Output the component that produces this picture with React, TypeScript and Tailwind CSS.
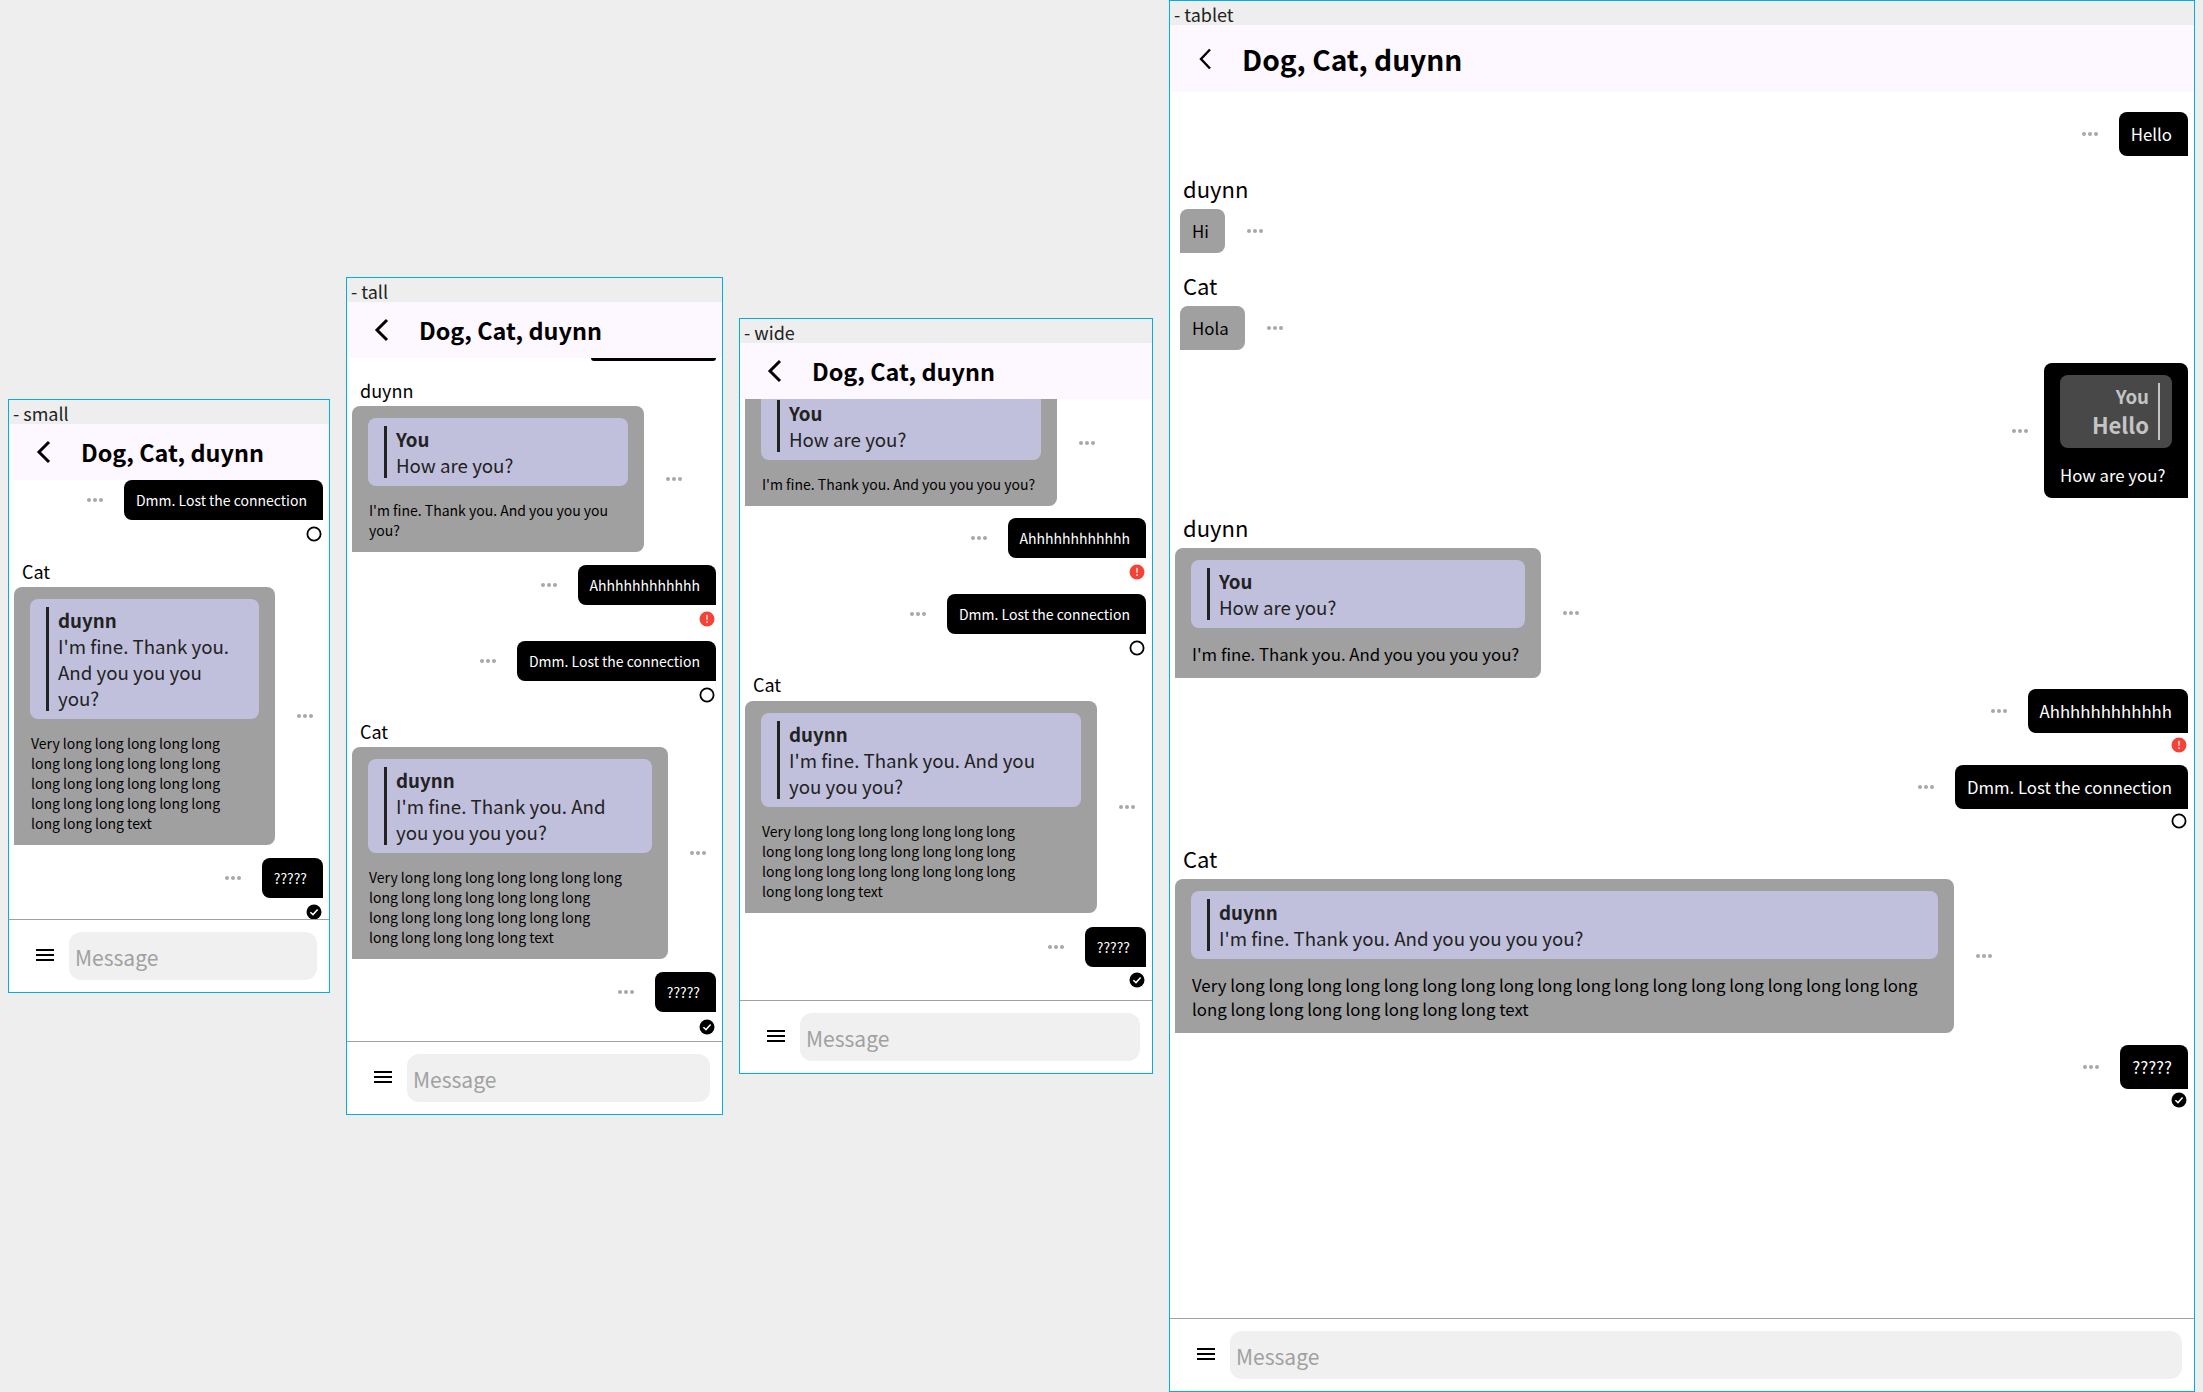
import React from "react";

const font = { fontFamily: '"Noto Sans CJK SC", "Noto Sans", sans-serif' };

function Dots() {
  return (
    <svg width="16" height="4" viewBox="0 0 16 4" className="shrink-0">
      <circle cx="2" cy="2" r="2" fill="#a8a8a8" />
      <circle cx="8" cy="2" r="2" fill="#a8a8a8" />
      <circle cx="14" cy="2" r="2" fill="#a8a8a8" />
    </svg>
  );
}

function Status({ kind, mt }: { kind: "sent" | "done" | "error"; mt: string }) {
  return (
    <div className={`flex justify-end mr-[7px] ${mt}`}>
      <svg width="16" height="16" viewBox="0 0 16 16" className="block">
        {kind === "sent" && <circle cx="8" cy="8" r="6.6" fill="none" stroke="#000" strokeWidth="1.8" />}
        {kind === "done" && (
          <>
            <circle cx="8" cy="8" r="7.5" fill="#000" />
            <path d="M4.4 8.2 L7 10.6 L11.6 5.6" fill="none" stroke="#fff" strokeWidth="1.5" />
          </>
        )}
        {kind === "error" && (
          <>
            <circle cx="8" cy="8" r="7.5" fill="#f44336" />
            <rect x="7.2" y="3.8" width="1.6" height="5" fill="#ffd0cc" />
            <rect x="7.2" y="10.2" width="1.6" height="1.8" fill="#ffd0cc" />
          </>
        )}
      </svg>
    </div>
  );
}

function Out({ text, cls, mt, quote }: { text: string; cls: string; mt: string; quote?: boolean }) {
  return (
    <div className={`flex justify-end items-center mr-[6px] ${quote ? "gap-[16px]" : "gap-[21px]"} ${mt}`}>
      <Dots />
      <div className={`bg-black text-white rounded-t-[8px] rounded-bl-[8px] ${cls}`}>
        {quote && (
          <div className="flex justify-end gap-[9px] w-[112px] bg-[#484848] rounded-[8px] text-[#c4c4c4] h-[73px] px-[12px] py-[8px] mb-[15px]">
            <div className="text-right">
              <div className="font-bold text-[18.7px] leading-[26px]">You</div>
              <div className="font-bold text-[22px] leading-[30px]">Hello</div>
            </div>
            <div className="w-[2px] bg-[#c4c4c4]" />
          </div>
        )}
        {text}
      </div>
    </div>
  );
}

function In({
  children,
  cls,
  mt,
}: {
  children: React.ReactNode;
  cls: string;
  mt?: string;
}) {
  return (
    <div className={`flex items-center gap-[22px] ${mt ?? ""}`}>
      <div className={`bg-[#a0a0a0] text-black rounded-t-[8px] rounded-br-[8px] shrink-0 ${cls}`}>{children}</div>
      <Dots />
    </div>
  );
}

function Quote({ title, lines }: { title: string; lines: string[] }) {
  return (
    <div className="bg-[#c0c0dc] rounded-[8px] text-[#222] text-[18.7px] leading-[26px] px-[16px] py-[8px] mb-[14px] flex gap-[9px]">
      <div className="w-[3px] bg-[#222] shrink-0" />
      <div className="whitespace-nowrap">
        <div className="font-bold">{title}</div>
        {lines.map((l) => (
          <div key={l}>{l}</div>
        ))}
      </div>
    </div>
  );
}

function Body({ lines, cls }: { lines: string[]; cls: string }) {
  return (
    <div className={`whitespace-nowrap pl-[1px] ${cls}`}>
      {lines.map((l, i) => (
        <div key={i}>{l}</div>
      ))}
    </div>
  );
}

function Name({ children, cls }: { children: string; cls: string }) {
  return <div className={`text-black ${cls}`}>{children}</div>;
}

function Frame({
  label,
  cls,
  tablet,
  children,
}: {
  label: string;
  cls: string;
  tablet?: boolean;
  children: React.ReactNode;
}) {
  return (
    <div className={`absolute bg-white border border-[#00aeef] flex flex-col overflow-hidden ${cls}`}>
      <div className="h-[24px] bg-[#eeeeee] text-[18px] leading-[26px] text-[#222] pl-[4px] overflow-hidden shrink-0">
        {label}
      </div>
      <div
        className={`bg-[#fdf7ff] flex items-center shrink-0 font-bold text-black ${tablet ? "h-[67px] text-[28.2px]" : "h-[56px] text-[23.4px]"}`}
      >
        <svg width="16" height="24" viewBox="0 0 16 24" className="ml-[26px] mr-[30px] shrink-0">
          {tablet ? (
            <path d="M14 2.5 L5 12 L14 21.5" fill="none" stroke="#000" strokeWidth="2.4" />
          ) : (
            <path d="M14 2 L4 12 L14 22" fill="none" stroke="#000" strokeWidth="3" />
          )}
        </svg>
        <span className="mt-[2px]">Dog, Cat, duynn</span>
      </div>
      <div className="flex-1 min-h-0 overflow-hidden">{children}</div>
      <div className="h-[73px] shrink-0 border-t border-[#a0a0a0] flex items-center pl-[27px] pr-[12px]">
        <svg width="18" height="12" viewBox="0 0 18 12" className="shrink-0 mr-[15px] -mt-[3px]">
          <rect width="18" height="2" y="0" fill="#000" />
          <rect width="18" height="2" y="5" fill="#000" />
          <rect width="18" height="2" y="10" fill="#000" />
        </svg>
        <div className="flex-1 h-[48px] rounded-[12px] bg-[#f0f0f0] text-[#a0a0a0] text-[21px] leading-[51px] pl-[6px]">
          Message
        </div>
      </div>
    </div>
  );
}

const smallB = "text-[14px] leading-[20px] pl-[12px] pr-[16px] py-[10px]";
const tabB = "text-[16.8px] leading-[24px] pl-[12px] pr-[16px] py-[10px]";
const nameS = "text-[18px] leading-[26px] ml-[13px]";
const nameT = "text-[22px] leading-[30px] ml-[13px]";
const bodyS = "text-[14px] leading-[20px]";
const bodyT = "text-[16.8px] leading-[24px]";
const inS = "ml-[5px] px-[16px] pt-[12px] pb-[12px]";

function longs(n: number) {
  return Array(n).fill("long").join(" ");
}

export default function App() {
  return (
    <div className="relative w-[2203px] h-[1392px] bg-[#eeeeee] overflow-hidden" style={font}>
      <Frame label="- small" cls="left-[8px] top-[399px] w-[322px] h-[594px]">
        <Out text="Dmm. Lost the connection" cls={smallB} mt="" />
        <Status kind="sent" mt="mt-[6px]" />
        <Name cls={`${nameS} mt-[16px]`}>Cat</Name>
        <In cls={`w-[261px] ${inS}`} mt="mt-[3px]">
          <Quote title="duynn" lines={["I'm fine. Thank you.", "And you you you", "you?"]} />
          <Body
            cls={bodyS}
            lines={[`Very ${longs(5)}`, longs(6), longs(6), longs(6), `${longs(3)} text`]}
          />
        </In>
        <Out text="?????" cls={smallB} mt="mt-[13px]" />
        <Status kind="done" mt="mt-[6px]" />
      </Frame>

      <Frame label="- tall" cls="left-[346px] top-[277px] w-[377px] h-[838px]">
        <div className="h-[3px] w-[125px] ml-auto mr-[6px] bg-black rounded-b-[8px]" />
        <Name cls={`${nameS} mt-[16px]`}>duynn</Name>
        <In cls={`w-[292px] ${inS}`} mt="mt-[3px]">
          <Quote title="You" lines={["How are you?"]} />
          <Body cls={bodyS} lines={["I'm fine. Thank you. And you you you", "you?"]} />
        </In>
        <Out text="Ahhhhhhhhhhhh" cls={smallB} mt="mt-[13px]" />
        <Status kind="error" mt="mt-[6px]" />
        <Out text="Dmm. Lost the connection" cls={smallB} mt="mt-[14px]" />
        <Status kind="sent" mt="mt-[6px]" />
        <Name cls={`${nameS} mt-[15px]`}>Cat</Name>
        <In cls={`w-[316px] ${inS}`} mt="mt-[3px]">
          <Quote title="duynn" lines={["I'm fine. Thank you. And", "you you you you?"]} />
          <Body cls={bodyS} lines={[`Very ${longs(7)}`, longs(7), longs(7), `${longs(5)} text`]} />
        </In>
        <Out text="?????" cls={smallB} mt="mt-[13px]" />
        <Status kind="done" mt="mt-[7px]" />
      </Frame>

      <Frame label="- wide" cls="left-[739px] top-[318px] w-[414px] h-[756px]">
        <div className="-mt-[19px]">
          <In cls={`w-[312px] ${inS}`}>
            <Quote title="You" lines={["How are you?"]} />
            <Body cls={bodyS} lines={["I'm fine. Thank you. And you you you you?"]} />
          </In>
        </div>
        <Out text="Ahhhhhhhhhhhh" cls={smallB} mt="mt-[12px]" />
        <Status kind="error" mt="mt-[6px]" />
        <Out text="Dmm. Lost the connection" cls={smallB} mt="mt-[14px]" />
        <Status kind="sent" mt="mt-[6px]" />
        <Name cls={`${nameS} mt-[15px]`}>Cat</Name>
        <In cls={`w-[352px] ${inS}`} mt="mt-[4px]">
          <Quote title="duynn" lines={["I'm fine. Thank you. And you", "you you you?"]} />
          <Body cls={bodyS} lines={[`Very ${longs(7)}`, longs(8), longs(8), `${longs(3)} text`]} />
        </In>
        <Out text="?????" cls={smallB} mt="mt-[14px]" />
        <Status kind="done" mt="mt-[5px]" />
      </Frame>

      <Frame label="- tablet" cls="left-[1169px] top-[0px] w-[1026px] h-[1392px]" tablet>
        <Out text="Hello" cls={tabB} mt="mt-[20px]" />
        <Name cls={`${nameT} mt-[17px]`}>duynn</Name>
        <In cls={`${tabB} ml-[10px]`} mt="mt-[6px]">
          Hi
        </In>
        <Name cls={`${nameT} mt-[17px]`}>Cat</Name>
        <In cls={`${tabB} ml-[10px]`} mt="mt-[6px]">
          Hola
        </In>
        <Out
          text="How are you?"
          cls="text-[16.8px] leading-[24px] px-[16px] pt-[12px] pb-[11px]"
          mt="mt-[13px]"
          quote
        />
        <Name cls={`${nameT} mt-[14px]`}>duynn</Name>
        <In cls={`w-[366px] ${inS}`} mt="mt-[6px]">
          <Quote title="You" lines={["How are you?"]} />
          <Body cls={bodyT} lines={["I'm fine. Thank you. And you you you you?"]} />
        </In>
        <Out text="Ahhhhhhhhhhhh" cls={tabB} mt="mt-[11px]" />
        <Status kind="error" mt="mt-[4px]" />
        <Out text="Dmm. Lost the connection" cls={tabB} mt="mt-[12px]" />
        <Status kind="sent" mt="mt-[4px]" />
        <Name cls={`${nameT} mt-[14px]`}>Cat</Name>
        <In cls={`w-[779px] ${inS}`} mt="mt-[6px]">
          <Quote title="duynn" lines={["I'm fine. Thank you. And you you you you?"]} />
          <Body cls={bodyT} lines={[`Very ${longs(18)}`, `${longs(8)} text`]} />
        </In>
        <Out text="?????" cls={tabB} mt="mt-[12px]" />
        <Status kind="done" mt="mt-[3px]" />
      </Frame>
    </div>
  );
}
